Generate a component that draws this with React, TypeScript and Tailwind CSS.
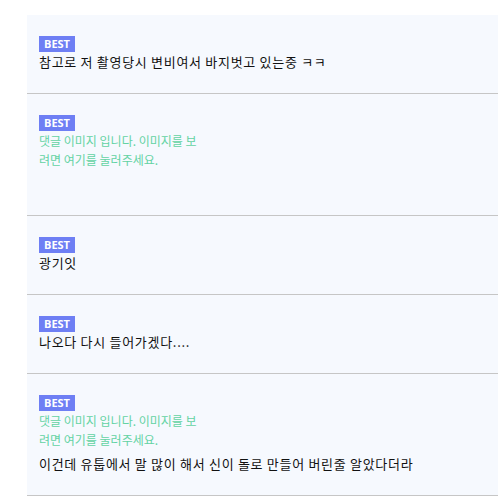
const comments = [
  { img: false, text: '참고로 저 촬영당시 변비여서 바지벗고 있는중 ㅋㅋ' },
  { img: true, text: '' },
  { img: false, text: '광기잇' },
  { img: false, text: '나오다 다시 들어가겠다....' },
  { img: true, text: '이건데 유툽에서 말 많이 해서 신이 돌로 만들어 버린줄 알았다더라' },
]

export default function App() {
  return (
    <div className="min-h-[504px] bg-white pt-[15px] font-['Noto_Sans_CJK_KR',sans-serif]">
      <ul className="ml-[27px] w-[471px] bg-[#f6f9fe]">
        {comments.map((c, i) => (
          <li key={i} className="border-b border-[#c6c6c6] px-3 pt-[21px] pb-[21px]">
            <span className="flex h-4 w-9 items-center justify-center bg-[#6e7ff4] font-['Open_Sans',sans-serif] text-[11px] font-bold text-white">
              BEST
            </span>
            {c.img && (
              <p className="w-[162px] text-[12px] leading-[19px] text-[#63d3a3]">
                댓글 이미지 입니다. 이미지를 보려면 여기를 눌러주세요.
              </p>
            )}
            <p className={`h-5 text-[13px] leading-5 tracking-[0.7px] text-[#111] ${c.img ? 'mt-[5px]' : ''}`}>{c.text}</p>
          </li>
        ))}
      </ul>
    </div>
  )
}
